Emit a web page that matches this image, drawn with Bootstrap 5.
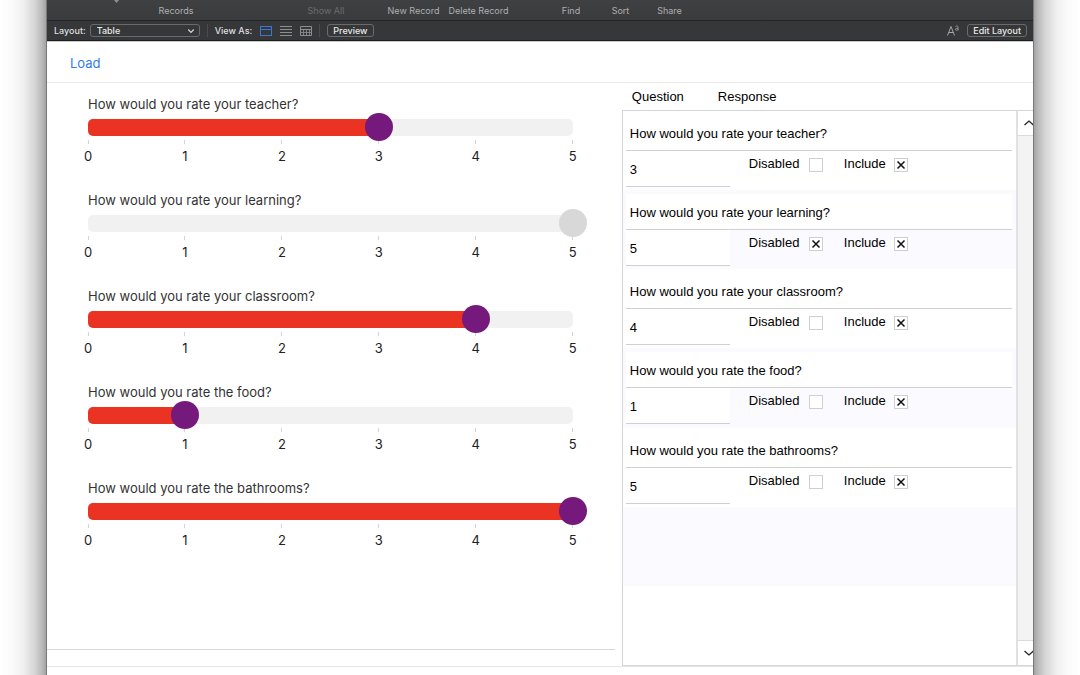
<!DOCTYPE html>
<html lang="en">
<head>
<meta charset="utf-8">
<meta name="viewport" content="width=device-width, initial-scale=1">
<title>Table</title>
<link href="https://cdn.jsdelivr.net/npm/bootstrap@5.3.0/dist/css/bootstrap.min.css" rel="stylesheet">
<style>
  :root { --shade: #fff, #fbfbfb 25%, #f0f0f0 50%, #d6d6d6 75%, #bcbcbc 90%, #a4a4a4; }
  body { font-family: "Liberation Sans", Arial, sans-serif; font-size: 13px; line-height: 16px; color: #000; overflow: hidden;
    background: linear-gradient(to right, var(--shade)) left / 46px 100% no-repeat, linear-gradient(to left, var(--shade)) right / 46px 100% no-repeat #fff; }
  .app-window { margin: 0 46px; border: solid #77787a; border-width: 0 1px; background: #fff; }
  .ui-font { font-family: Inter, sans-serif; }

  .toolbar-main { height: 21px; background: linear-gradient(#3f4042, #3a3b3d); border-bottom: 1px solid #232425; padding-left: 47px; }
  .toolbar-main button { border: 0; background: none; padding: 0; color: #aeafb0; font-size: 9px; line-height: 22px; white-space: nowrap; }
  .toolbar-main button:disabled { color: #6c6d6f; }
  .tb-caret { width: 46px; } .tb-records { width: 72px; } .tb-all { width: 60px; margin: 0 25px 0 84px; }
  .tb-record { width: 65px; } .tb-find { width: 50px; margin-left: 35px; } .tb-item { width: 49px; }
  .tb-caret svg { display: block; margin: 0 auto; }

  .toolbar-layout { height: 20px; background: #363738; border-bottom: 1px solid #1c1d1e; padding: 0 6px 0 7px; color: #dfdfe0; font-size: 9px; font-weight: 500; line-height: 12px; }
  .toolbar-layout .form-select { width: 110px; height: 13px; min-height: 0; margin-left: 4px; padding: 0 20px 0 6px; font-size: 9px; line-height: 11px; font-weight: 500; color: #e8e8e8; border: 1px solid #6a6b6c; border-radius: 3px; background-color: transparent; background-position: right 4px center; background-size: 8px 8px;
    background-image: url("data:image/svg+xml,%3Csvg xmlns='http://www.w3.org/2000/svg' viewBox='0 0 8 8'%3E%3Cpath d='M1.2 2.5 4 5.3 6.800 2.5' fill='none' stroke='%23d8d8d8' stroke-width='1.2'/%3E%3C/svg%3E"); }
  .toolbar-layout .form-select option { color: #000; }
  .push-btn { height: 13px; padding: 0 5px; border: 1px solid #6a6b6c; border-radius: 3px; background: none; color: #e8e8e8; font-size: 9px; line-height: 11px; font-weight: 500; white-space: nowrap; }
  .icon-btn { border: 0; background: none; padding: 0; display: block; color: #8d8e8f; line-height: 0; }
  .icon-btn.current { color: #3b74d2; }
  .tb-divider { width: 1px; height: 13px; margin: 0 7px; background: #4a4b4c; }

  .load-bar { height: 42px; border-top: 1px solid #c9caca; border-bottom: 1px solid #e9e9ea; padding: 2px 0 0 23px; }
  .load-bar a { color: #2f7cf0; font-size: 13px; }

  .panes { display: grid; grid-template-columns: 58fr 42fr; column-gap: 7px; min-height: 0; }
  .survey-pane { min-width: 0; margin-bottom: 16px; border-bottom: 1px solid #d9d9d9; padding: 13px 42px 0 41px; }
  .portal-pane { min-width: 0; }

  .rating { height: 96px; }
  .rating label { display: block; height: 16px; font-size: 13px; color: #333; }
  .rating-track { position: relative; height: 17px; margin-top: 7px; border-radius: 5px; background: #f1f1f1; }
  .rating-fill { height: 17px; border-radius: 5px 0 0 5px; background: #ea3323; }
  .rating-track input { position: absolute; left: -14px; top: -6px; width: calc(100% + 28px); height: 28px; margin: 0; appearance: none; background: none; }
  .rating-track input::-webkit-slider-thumb { appearance: none; width: 28px; height: 28px; border-radius: 50%; background: #75197c; }
  .rating-track input:disabled::-webkit-slider-thumb { background: #d8d8d8; }
  .rating-scale { margin-top: 4px; font-size: 13px; color: #222; }
  .rating-scale span { width: 0; display: flex; flex-direction: column; align-items: center; }
  .rating-scale span::before { content: ""; width: 1px; height: 4px; margin-bottom: 4px; background: #d4d4d4; }

  .portal-head { height: 27px; padding: 6px 0 0 10px; gap: 34px; }
  .portal-box { border: 1px solid #d5d6d8; border-right: 0; }
  .portal-row { flex: 1 1 0; min-height: 0; padding: 4px 4px 0 3px; }
  .portal-row:nth-child(even) { background: #fafaff; }
  .field { display: block; width: 100%; height: 36px; padding: 2px 4px 0; border: 0; border-bottom: 1px solid #d0d0d1; border-radius: 0; background: #fff; color: #000; font-size: 13px; }
  .field-response { width: 104px; }
  .tick { margin-top: 5px; }
  .tick input { appearance: none; width: 14px; height: 14px; margin: 2px 0 0; border: 1px solid #cfcfcf; background: #fff center / 12px 12px no-repeat; }
  .tick input:checked { background-image: url("data:image/svg+xml,%3Csvg xmlns='http://www.w3.org/2000/svg' viewBox='0 0 12 12'%3E%3Cpath d='M2.500 2.500 9.500 9.500M9.500 2.500 2.500 9.500' stroke='%23111' stroke-width='1.5'/%3E%3C/svg%3E"); }
  .tick-disabled { margin-left: 19px; } .tick-include { margin-left: 21px; }
  .tick span { width: 52px; } .tick-include span { width: 42px; }

  .portal-scroll { width: 17px; background: #f3f3f4; border-left: 2px solid #e0e1e3; overflow: hidden; }
  .portal-scroll button { width: 22px; height: 25px; padding: 0; border: solid #d9dadc; border-width: 0 0 1px; background: #fff; line-height: 0; }
  .portal-scroll button:last-child { border-width: 1px 0 0; }
  .status-strip { height: 9px; border-top: 1px solid #e6e6e7; }
</style>
</head>
<body>
<main class="app-window vh-100 d-flex flex-column">
  <nav class="toolbar-main ui-font d-flex flex-shrink-0" aria-label="Records">
    <button type="button" class="tb-caret" aria-label="Go to record"><svg width="6" height="20" viewBox="0 0 6 20"><path d="M0 0h5L2.500 3z" fill="#8d8e8f"/></svg></button>
    <button type="button" class="tb-records">Records</button>
    <button type="button" class="tb-all" disabled>Show All</button>
    <button type="button" class="tb-record">New Record</button>
    <button type="button" class="tb-record">Delete Record</button>
    <button type="button" class="tb-find">Find</button>
    <button type="button" class="tb-item">Sort</button>
    <button type="button" class="tb-item">Share</button>
  </nav>

  <div class="toolbar-layout ui-font d-flex align-items-center flex-shrink-0">
    <label for="layout">Layout:</label>
    <select id="layout" class="form-select"><option>Table</option></select>
    <div class="tb-divider"></div>
    <span class="me-2">View As:</span>
    <div class="d-flex gap-2">
      <button type="button" class="icon-btn current" aria-label="Form view"><svg width="12" height="10" viewBox="0 0 12 10" fill="none" stroke="currentColor"><rect x=".5" y=".5" width="11" height="9"/><path d="M0 3.500h12"/></svg></button>
      <button type="button" class="icon-btn" aria-label="List view"><svg width="12" height="10" viewBox="0 0 12 10" stroke="currentColor"><path d="M0 .5h12M0 3.500h12M0 6.500h12M0 9.500h12"/></svg></button>
      <button type="button" class="icon-btn" aria-label="Table view"><svg width="12" height="10" viewBox="0 0 12 10" fill="none" stroke="currentColor"><path d="M.5 .5h11v9H.5zM0 3.500h12"/><path d="M0 6.500h12M3.500 3v6M6.500 3v6M9.500 3v6" stroke-width=".8"/></svg></button>
    </div>
    <div class="tb-divider"></div>
    <button type="button" class="push-btn">Preview</button>
    <button type="button" class="icon-btn ms-auto me-2" aria-label="Formatting"><svg width="12" height="11" viewBox="0 0 12 11" fill="none" stroke="#a5a6a7"><path d="M.5 10.500 4 1.500l3.500 9M1.800 7.500h4.400"/><path d="M8.500 1.500c1-1 2.500-.6 2.500.5v3.500M11 3.200c-1.500 0-2.600.3-2.600 1.200 0 1.200 2.100 1.200 2.600 0" stroke-width=".8"/></svg></button>
    <button type="button" class="push-btn">Edit Layout</button>
  </div>

  <div class="load-bar d-flex align-items-center flex-shrink-0"><a href="#" class="ui-font text-decoration-none">Load</a></div>

  <div class="panes flex-grow-1">
    <section class="survey-pane ui-font" id="ratings" aria-label="Ratings"></section>
    <section class="portal-pane d-flex flex-column" aria-label="Responses">
      <div class="portal-head d-flex"><span>Question</span><span>Response</span></div>
      <div class="portal-box d-flex flex-grow-1">
        <div class="d-flex flex-column flex-grow-1" id="portal"></div>
        <div class="portal-scroll d-flex flex-column justify-content-between flex-shrink-0">
          <button type="button" aria-label="Scroll up"><svg width="12" height="8" viewBox="0 0 12 8"><path d="M1.500 6 6 2l4.500 4" fill="none" stroke="#222" stroke-width="1.300"/></svg></button>
          <button type="button" aria-label="Scroll down"><svg width="12" height="8" viewBox="0 0 12 8"><path d="M1.500 2 6 6l4.500-4" fill="none" stroke="#222" stroke-width="1.300"/></svg></button>
        </div>
      </div>
    </section>
  </div>
  <div class="status-strip flex-shrink-0"></div>
</main>

<script src="https://cdn.jsdelivr.net/npm/bootstrap@5.3.0/dist/js/bootstrap.bundle.min.js"></script>
<script>
  const MAX = 5, PORTAL_ROWS = 7;
  const questions = [
    { text: 'How would you rate your teacher?', value: 3 },
    { text: 'How would you rate your learning?', value: 5, disabled: true },
    { text: 'How would you rate your classroom?', value: 4 },
    { text: 'How would you rate the food?', value: 1 },
    { text: 'How would you rate the bathrooms?', value: 5 }
  ];
  const scale = Array.from({ length: MAX + 1 }, (_, n) => `<span>${n}</span>`).join('');

  document.getElementById('ratings').innerHTML = questions.map((q, i) => `
    <div class="rating">
      <label for="r${i}">${q.text}</label>
      <div class="rating-track">
        <div class="rating-fill" style="width:${q.disabled ? 0 : q.value / MAX * 100}%"></div>
        <input type="range" id="r${i}" min="0" max="${MAX}" value="${q.value}" ${q.disabled ? 'disabled' : ''}>
      </div>
      <div class="rating-scale d-flex justify-content-between">${scale}</div>
    </div>`).join('');

  document.querySelectorAll('.rating-track input').forEach(input =>
    input.addEventListener('input', () => {
      input.previousElementSibling.style.width = input.value / MAX * 100 + '%';
    }));

  document.getElementById('portal').innerHTML = Array.from({ length: PORTAL_ROWS }, (_, i) => {
    const q = questions[i];
    return q ? `
    <div class="portal-row">
      <input type="text" class="field" aria-label="Question" value="${q.text}">
      <div class="d-flex align-items-start">
        <input type="text" class="field field-response" aria-label="Response" value="${q.value}">
        <label class="tick tick-disabled d-flex"><span>Disabled</span><input type="checkbox" class="ms-2" ${q.disabled ? 'checked' : ''}></label>
        <label class="tick tick-include d-flex"><span>Include</span><input type="checkbox" class="ms-2" checked></label>
      </div>
    </div>` : '<div class="portal-row"></div>';
  }).join('');
</script>
</body>
</html>
